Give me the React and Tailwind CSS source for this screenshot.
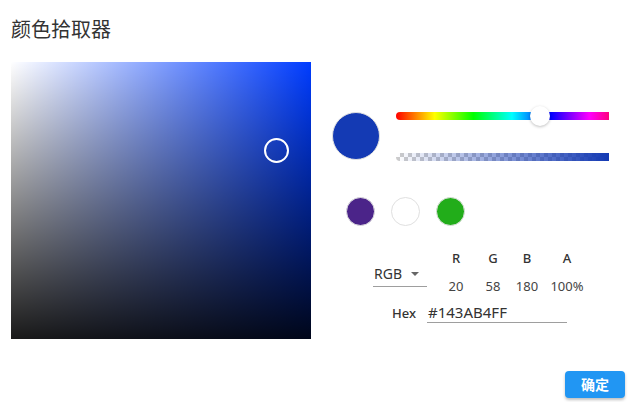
import React from 'react';

const swatches = ['#4b2489', '#ffffff', '#22ad1a'];
const channels = [
  { label: 'R', value: '20', w: 'w-[36px]' },
  { label: 'G', value: '58', w: 'w-[38px]' },
  { label: 'B', value: '180', w: 'w-[30px]' },
  { label: 'A', value: '100%', w: 'w-[50px]' },
];

const App = () => {
  return (
    <div className="w-[629px] h-[402px] bg-white flex flex-col font-['Noto_Sans','Noto_Sans_CJK_SC',sans-serif] text-[#333] overflow-hidden">
      {/* Title */}
      <h1 className="pl-[11px] pt-[19px] text-[20px] leading-[20px] font-normal text-[#333] font-['Noto_Sans_CJK_SC',sans-serif]">
        颜色拾取器
      </h1>

      <div className="flex mt-[23px]">
        {/* Saturation / value area */}
        <div className="ml-[11px] w-[300px] h-[277px] relative bg-[#003cff]">
          <div className="absolute inset-0 bg-linear-to-r/srgb from-white to-white/0"></div>
          <div className="absolute inset-0 bg-linear-to-b/srgb from-black/0 to-black/90"></div>
          <div className="absolute left-[253px] top-[76px] w-[25px] h-[25px] rounded-full border-2 border-white"></div>
        </div>

        {/* Controls */}
        <div className="ml-[21px] w-[277px] flex flex-col">
          <div className="flex mt-[50px]">
            <div className="w-[48px] h-[48px] rounded-full bg-[#143ab4] border border-[#e0e0e0]"></div>
            <div className="ml-[16px] w-[213px] flex flex-col">
              <div className="relative h-[8px]">
                <div className="w-[213px] h-[8px] overflow-hidden">
                  <div className="w-[232px] h-[8px] rounded-full bg-[linear-gradient(to_right,#ff0000,#ffff00,#00ff00,#00ffff,#0000ff,#ff00ff,#ff0000)]"></div>
                </div>
                <div className="absolute left-[134px] top-[-6px] w-[20px] h-[20px] rounded-full bg-white shadow-[0_1px_3px_rgba(0,0,0,0.25)]"></div>
              </div>
              <div className="mt-[33px] w-[213px] h-[8px] relative rounded-l-full overflow-hidden bg-white bg-[repeating-conic-gradient(#cccccc_0_25%,#ffffff_0_50%)] bg-[length:8px_8px]">
                <div className="absolute inset-0 bg-linear-to-r/srgb from-[#143ab4]/0 to-[#143ab4]"></div>
              </div>
            </div>
          </div>

          {/* Swatches */}
          <div className="flex gap-[16px] ml-[14px] mt-[36px]">
            {swatches.map((c) => (
              <div
                key={c}
                className="w-[29px] h-[29px] rounded-full border border-[#e0e0e0]"
                style={{ backgroundColor: c }}
              ></div>
            ))}
          </div>

          {/* Channels */}
          <div className="flex mt-[22px]">
            <div className="ml-[41px] mt-[14px] w-[54px] h-[25px] flex items-center border-b border-[#9e9e9e]">
              <span className="text-[14px] leading-[20px] pl-[1px] text-[#333]">RGB</span>
              <span className="ml-[9px] w-0 h-0 border-l-[4px] border-r-[4px] border-t-[4px] border-l-transparent border-r-transparent border-t-[#666]"></span>
            </div>
            <div className="ml-[11px] flex flex-col">
              <div className="flex">
                {channels.map((ch) => (
                  <div key={ch.label} className={`${ch.w} text-center text-[13px] leading-[20px] font-medium text-[#333]`}>
                    {ch.label}
                  </div>
                ))}
              </div>
              <div className="flex mt-[8px]">
                {channels.map((ch) => (
                  <div key={ch.label} className={`${ch.w} text-center text-[13px] leading-[20px] text-[#444]`}>
                    {ch.value}
                  </div>
                ))}
              </div>
            </div>
          </div>

          <div className="flex items-start mt-[7px] ml-[60px]">
            <span className="text-[13px] leading-[20px] font-medium text-[#333]">Hex</span>
            <div className="ml-[11px] w-[140px] h-[20px] border-b border-[#9e9e9e] text-[15px] leading-[19px] pl-[1px] text-[#333]">
              #143AB4FF
            </div>
          </div>
        </div>
      </div>

      <div className="flex justify-end pr-[4px] mt-[32px]">
        <button className="w-[60px] h-[27px] rounded-[4px] bg-[#2196f3] text-white text-[14px] font-bold font-['Noto_Sans_CJK_SC',sans-serif] shadow-[0_2px_3px_rgba(0,0,0,0.25)]">
          确定
        </button>
      </div>
    </div>
  );
};

export default App;
